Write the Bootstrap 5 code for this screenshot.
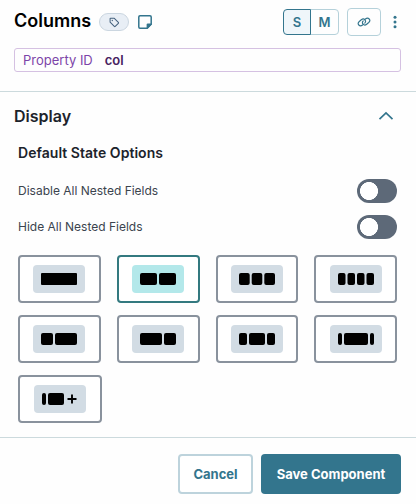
<!DOCTYPE html>
<html lang="en">
  <head>
    <meta charset="UTF-8" />
    <meta name="viewport" content="width=device-width, initial-scale=1.0" />
    <title>Columns</title>
    <link
      href="https://cdn.jsdelivr.net/npm/bootstrap@5.3.3/dist/css/bootstrap.min.css"
      rel="stylesheet"
    />
    <style>
      :root {
        --teal: #33758d;
        --line: #b5d1da;
      }

      body {
        font-family: Inter, "Liberation Sans", sans-serif;
        color: #1c232b;
        background: #fefefe;
        overflow: hidden;
      }

      svg {
        display: block;
      }

      .panel-header {
        height: 92px;
        padding: 8px 15px 0 14px;
        border-bottom: 1px solid #ccdadd;
      }

      .panel-title {
        font-size: 18px;
        font-weight: 600;
        line-height: 26px;
        color: #000;
        margin: 0 9px 0 0;
        padding-bottom: 2px;
        width: 76px;
        white-space: nowrap;
      }

      .tag-pill {
        width: 30px;
        height: 18px;
        background: #e8eef5;
        border: 1px solid #cbd6e0;
        margin-right: 9px;
      }

      .mode-group .btn {
        width: 28px;
        height: 26px;
        padding: 0;
        font-size: 13px;
        font-weight: 600;
        line-height: 25px;
        color: var(--teal);
        border: 1px solid var(--line);
        border-radius: 4px;
      }

      .mode-group .btn.active {
        background: #eff6fa;
        border-color: var(--teal);
        color: var(--teal);
      }

      .mode-group .btn:last-child {
        width: 29px;
      }

      .btn-link-copy {
        width: 34px;
        height: 28px;
        padding: 0;
        border: 1px solid var(--line);
        border-radius: 4px;
      }

      .menu-dots {
        width: 20px;
        margin: 0 -4px 0 4px;
      }

      .property-box {
        height: 24px;
        margin-top: 12px;
        padding: 1px 8px 0;
        border: 1px solid #d5c1e2;
        border-radius: 3px;
        font-size: 13px;
        color: #7c45a8;
      }

      .property-box strong {
        font-weight: 600;
        color: #47215f;
      }

      .panel-body {
        padding: 12px 19px 0 18px;
      }

      .section-title {
        font-size: 16px;
        font-weight: 600;
        line-height: 24px;
        margin-left: -4px;
        padding-right: 3px;
      }

      .sub-title {
        font-size: 14px;
        font-weight: 600;
        line-height: 20px;
        letter-spacing: 0.04px;
        margin: 15px 0 16px;
      }

      .option-row {
        height: 24px;
        font-size: 12px;
        color: #3b444e;
        margin-bottom: 12px;
      }

      .option-row .form-check-input {
        width: 40px;
        height: 24px;
        margin: 0;
        border: 0;
        background-color: #5d6978;
        background-image: radial-gradient(circle at 12px 12px, #fff 8.7px, transparent 9.3px);
        background-position: 0 0;
        background-size: 40px 24px;
      }

      .layout-grid {
        display: grid;
        grid-template-columns: repeat(4, minmax(0, 1fr));
        gap: 12px 16px;
        margin-top: 16px;
      }

      .layout-tile {
        height: 48px;
        padding: 0;
        background: #fff;
        border: 2px solid #89929d;
        border-radius: 4px;
      }

      .layout-tile span {
        padding: 8px;
        background: #d2dce4;
        border-radius: 4px;
      }

      .layout-tile.selected {
        border-color: #33797f;
      }

      .layout-tile.selected span {
        background: #b3e8ea;
      }

      .layout-tile.custom {
        width: 84px;
      }

      .panel-footer {
        margin-top: 14px;
        padding: 16px 15px 0;
        border-top: 1px solid #ccdadd;
      }

      .panel-footer .btn {
        height: 40px;
        padding: 1px 0 0;
        font-size: 13px;
        font-weight: 700;
        border-radius: 4px;
      }

      .btn-cancel {
        width: 75px;
        color: var(--teal);
        background: #fff;
        border: 2px solid #bdd3dc;
      }

      /* keep the border colour over the Bootstrap button reset */
      .panel-footer .btn-cancel {
        border-color: #bdd3dc;
      }

      .btn-save,
      .btn-save:hover {
        width: 140px;
        color: #fff;
        background: var(--teal);
        border: 0;
      }
    </style>
  </head>
  <body>
    <header class="panel-header">
      <div class="d-flex align-items-center">
        <h1 class="panel-title">Columns</h1>
        <span class="tag-pill rounded-pill d-flex align-items-center justify-content-center">
          <svg width="11" height="11" viewBox="0 0 12 12" fill="none" stroke="#44617d" stroke-width="1.1" stroke-linejoin="round">
            <path d="M1.2 2v3.6l4.6 4.7q.5.5 1 0l3.4-3.4q.5-.5 0-1L5.8 1.4H1.8q-.6 0-.6.6z" />
            <circle cx="3.6" cy="3.8" r=".7" fill="#44617d" stroke="none" />
          </svg>
        </span>
        <svg width="14" height="14" viewBox="0 0 14 14">
          <path d="M2 .8h10q1.2 0 1.2 1.2v7.2l-4 4H2Q.8 13.2.8 12V2Q.8.8 2 .8z" fill="none" stroke="#33758d" stroke-width="1.5" />
          <path d="M8.6 13.4V9.8q0-1.2 1.2-1.2h3.8v1L9.6 13.8z" fill="#33758d" />
        </svg>
        <div class="mode-group btn-group ms-auto" role="group">
          <button type="button" class="btn active">S</button>
          <button type="button" class="btn">M</button>
        </div>
        <button type="button" class="btn btn-link-copy d-flex align-items-center justify-content-center ms-2" aria-label="Copy link">
          <svg width="14" height="12" viewBox="0 0 14 12" fill="none" stroke="#33758d" stroke-width="1.15" stroke-linecap="round">
            <path d="M6.3 8.4 5.6 9C4.3 10 2.700 10 1.800 9S1.200 6.500 2.300 5.500l2-1.700c1.200-1 2.700-1 3.600 0s.8 2.300-.1 3.300" />
            <path d="M7.700 3.600 8.400 3c1.300-1 2.900-1 3.800 0s.6 2.500-.5 3.500l-2 1.700c-1.200 1-2.700 1-3.600 0s-.8-2.300.1-3.300" />
          </svg>
        </button>
        <div class="menu-dots d-flex justify-content-center">
          <svg width="4" height="14" viewBox="0 0 4 14" fill="#33758d">
            <circle cx="2" cy="2.3" r="1.5" />
            <circle cx="2" cy="7" r="1.5" />
            <circle cx="2" cy="11.7" r="1.5" />
          </svg>
        </div>
      </div>
      <div class="property-box d-flex align-items-center">
        <span>Property ID</span>
        <strong class="ms-2 ps-1">col</strong>
      </div>
    </header>

    <main class="panel-body">
      <div class="section-title d-flex justify-content-between align-items-center">
        <span>Display</span>
        <svg width="16" height="10" viewBox="0 0 16 10" fill="none" stroke="#33758d" stroke-width="1.7">
          <path d="M1.5 8.2 8 2l6.5 6.2" />
        </svg>
      </div>
      <h3 class="sub-title">Default State Options</h3>
      <div class="option-row form-switch d-flex align-items-center justify-content-between p-0">
        <label for="disableAll">Disable All Nested Fields</label>
        <input class="form-check-input" type="checkbox" role="switch" id="disableAll" />
      </div>
      <div class="option-row form-switch d-flex align-items-center justify-content-between p-0">
        <label for="hideAll">Hide All Nested Fields</label>
        <input class="form-check-input" type="checkbox" role="switch" id="hideAll" />
      </div>
      <div class="layout-grid" id="layoutGrid"></div>
    </main>

    <footer class="panel-footer d-flex justify-content-end gap-2">
      <button type="button" class="btn btn-cancel">Cancel</button>
      <button type="button" class="btn btn-save">Save Component</button>
    </footer>

    <script>
      // Block widths for each column preset, 2px apart
      const layouts = [
        [36],
        [17, 17],
        [10.7, 10.6, 10.7],
        [7.5, 7.5, 7.5, 7.5],
        [12, 22],
        [22, 12],
        [8, 16, 8],
        [4, 24, 4],
        [4, 16],
      ];
      const grid = document.getElementById("layoutGrid");

      layouts.forEach((widths, i) => {
        const custom = i === layouts.length - 1;
        let x = 0;
        let shapes = "";
        widths.forEach((w) => {
          const r = w === 36 ? 1 : 2;
          shapes += `<rect x="${x}" width="${w}" height="12" rx="${r}" />`;
          x += w + 2;
        });
        if (custom) {
          shapes += '<path d="M25.5 6h9M30 1.5v9" stroke="#000" stroke-width="1.9" />';
        }

        const tile = document.createElement("button");
        tile.type = "button";
        tile.className = "layout-tile d-flex align-items-center justify-content-center";
        if (i === 1) tile.classList.add("selected");
        if (custom) tile.classList.add("custom");
        tile.innerHTML = `<span><svg width="36" height="12" viewBox="0 0 36 12">${shapes}</svg></span>`;
        tile.addEventListener("click", () => {
          grid.querySelector(".selected").classList.remove("selected");
          tile.classList.add("selected");
        });
        grid.appendChild(tile);
      });
    </script>
    <script src="https://cdn.jsdelivr.net/npm/bootstrap@5.3.3/dist/js/bootstrap.bundle.min.js"></script>
  </body>
</html>
